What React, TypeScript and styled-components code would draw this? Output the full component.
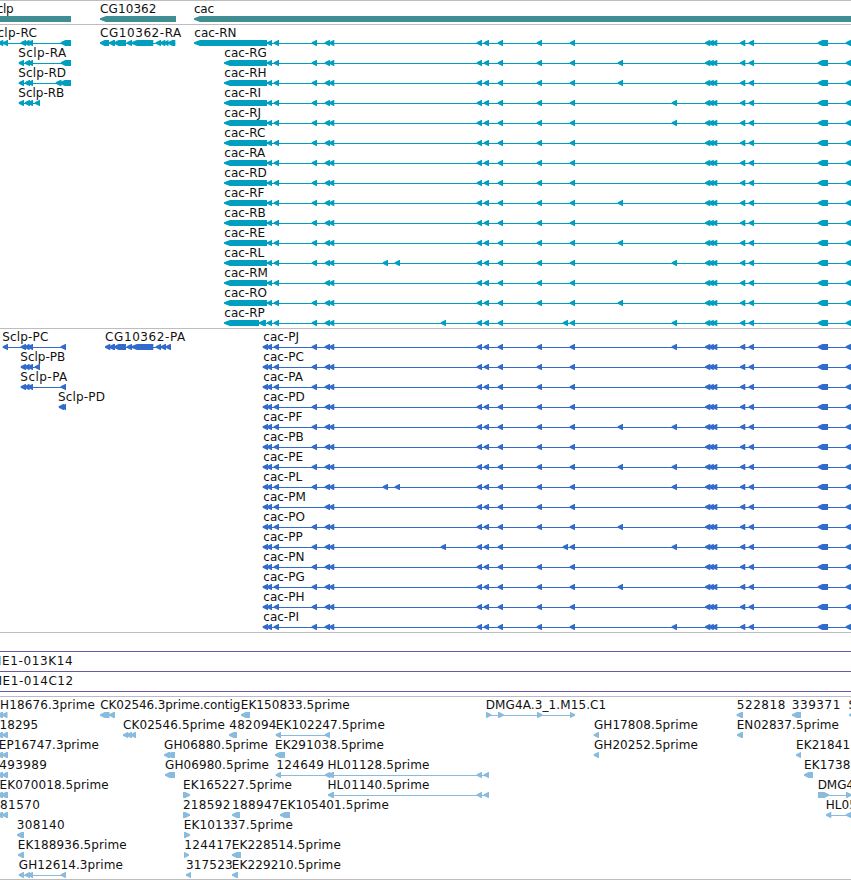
import React from "react";
import styled, { createGlobalStyle } from "styled-components";

const GlobalStyle = createGlobalStyle`
  body {
    margin: 0;
    background: #fff;
    overflow: hidden;
  }
`;

const VIEW_WIDTH = 851;

const Browser = styled.main`
  display: flex;
  flex-direction: column;
  width: ${VIEW_WIDTH}px;
  height: 880px;
  background: #fff;
`;

const TrackPanel = styled.section<{ $color: string; $last?: boolean }>`
  display: flex;
  flex-direction: column;
  padding: 1px 0 ${(p) => (p.$last ? 1 : 2)}px;
  border-top: 1px solid #bdbdbd;
  border-bottom: ${(p) => (p.$last ? "1px solid #bdbdbd" : "none")};
  color: ${(p) => p.$color};
`;

const Lane = styled.svg`
  display: block;
  flex: none;
  width: ${VIEW_WIDTH}px;
  height: 20px;
  overflow: hidden;
`;

const Label = styled.text`
  font-family: "DejaVu Sans", sans-serif;
  font-size: 12px;
  fill: #111;
`;

const Glyph = styled.path`
  fill: currentColor;
`;

type Exon = [start: number, end: number];

interface Feature {
  name: string;
  x: number;
  width?: number;
  exons: Exon[];
  forward?: boolean;
  connected?: boolean;
}

const f = (
  name: string,
  x: number,
  width: number | undefined,
  exons: Exon[],
  connected = false,
  forward = false,
): Feature => ({ name, x, width, exons, connected, forward });

const arrows = (...starts: number[]): Exon[] => starts.map((s) => [s, s + 5.3]);

/* An exon is a bar whose leading end narrows to a blunt tip */
function exonPath([a, b]: Exon, forward?: boolean) {
  const head = Math.min(b - a, b - a > 12 ? 6 : 4.6);
  return forward
    ? `M${b} 16.2L${b - head} 14H${a}V20H${b - head}L${b} 17.8Z`
    : `M${a} 16.2L${a + head} 14H${b}V20H${a + head}L${a} 17.8Z`;
}

function FeatureGlyph({ feature }: { feature: Feature }) {
  const { name, x, width, exons, forward, connected } = feature;
  const from = exons.length ? exons[0][0] : 0;
  const to = exons.length ? exons[exons.length - 1][1] : 0;
  return (
    <g>
      {connected && <Glyph d={`M${from + 1} 17H${to}V18H${from + 1}Z`} />}
      {exons.map((e, i) => (
        <Glyph key={i} d={exonPath(e, forward)} />
      ))}
      {name && (
        <Label x={x} y={11} textLength={width}>
          {name}
        </Label>
      )}
    </g>
  );
}

/* Exons of the cac locus */
const EX_620 = 617.7;
const EX_674 = 671.7;

function cacExons(head: Exon[], extra: number[] = [], skip: number[] = []): Exon[] {
  const shared = [
    273.7, 311.7, 324.7, 329, 476.7, 483.7, 497.7, 536.7, 569.7, 705, 708.5, 712, 740, 748.7,
  ].filter((s) => !skip.includes(s));
  const body = arrows(...shared, ...extra).sort((a, b) => a[0] - b[0]);
  return [...head, ...body, [817.7, 828], [845.7, 853]];
}

const longHead: Exon[] = [[224, 267], [267, 272]];
const pepHead: Exon[] = [[262.7, 268], [266.7, 272]];

const rna = (s: string, extra?: number[], skip?: number[], head = longHead) =>
  f(`cac-R${s}`, head[0][0] + 0.3, undefined, cacExons(head, extra, skip), true);
const pep = (s: string, extra?: number[], skip?: number[]) =>
  f(`cac-P${s}`, 263.3, undefined, cacExons(pepHead, extra, skip), true);

const genes: Feature[][] = [
  [
    f("Sclp", -10.5, 24, [[-12, 71]]),
    f("CG10362", 100, 56.5, [[100, 176]]),
    f("cac", 194, 20, [[194, 860]]),
  ],
];

const triple = arrows(20.7, 24.3, 27.7);
const offsetTriple = arrows(18.7, 24.7, 27.7);

const transcripts: Feature[][] = [
  [
    f("Sclp-RC", -10.5, 47.3, [...arrows(-2, 2.7), ...triple, [60.7, 71]], true),
    f("CG10362-RA", 100, 81.3, [
      [100, 109], [109, 115], [114, 126], [126.7, 132], [131, 153.3],
      [155.7, 161], [160, 165.3], [163.5, 168.5], [167.7, 175.3],
    ], true),
    rna("N", [], [], [[194, 267], [267, 272]]),
  ],
  [f("Sclp-RA", 18.3, 47.8, [...offsetTriple, [60.7, 71]], true), rna("G", [EX_620])],
  [f("Sclp-RD", 18.3, 47.8, [...offsetTriple, [55.7, 61.5], [60, 71]], true), rna("H", [EX_620])],
  [f("Sclp-RB", 18.3, 46, [...offsetTriple, [34.7, 40]], true), rna("I", [EX_674])],
  [rna("J", [EX_674])],
  [rna("C")],
  [rna("A")],
  [rna("D")],
  [rna("F", [EX_620])],
  [rna("B")],
  [rna("E", [EX_620])],
  [rna("L", [382.7, 394.7, EX_674])],
  [rna("M", [], [311.7])],
  [rna("O", [EX_620])],
  [rna("P", [440.7, 562.7, EX_674], [536.7], [[224, 259], [259, 266], [267, 272]])],
];

const proteins: Feature[][] = [
  [
    f("Sclp-PC", 2.3, 46, [...arrows(2.7), ...triple, ...arrows(60.7)], true),
    f("CG10362-PA", 105, 80.3, [
      [105, 110.3], [109, 115], [114, 126], [126.7, 132], [131, 153.3],
      [155.7, 161], [160.5, 166], [165.5, 171],
    ], true),
    pep("J", [EX_674]),
  ],
  [f("Sclp-PB", 20.3, 45, [...triple, [34.7, 40]], true), pep("C")],
  [f("Sclp-PA", 20.3, 47, [...triple, ...arrows(60.7)], true), pep("A")],
  [f("Sclp-PD", 58, 47, arrows(58.7, 60.7)), pep("D")],
  [pep("F", [EX_620, EX_674])],
  [pep("B")],
  [pep("E", [EX_620, EX_674])],
  [pep("L", [382.7, 394.7, EX_674])],
  [pep("M", [], [311.7])],
  [pep("O", [EX_620])],
  [pep("P", [440.7, 562.7, EX_674], [536.7])],
  [pep("N")],
  [pep("G", [EX_620])],
  [pep("H")],
  [pep("I", [EX_674])],
];

const clones = ["", "ME1-013K14", "ME1-014C12"];

const edge: Exon[] = [[-3, 3], [2, 7.5]];

const ests: Feature[][] = [
  [
    f("H18676.3prime", 0, 95, edge),
    f("CK02546.3prime.contig", 100.3, 140, [[100, 109.5], [109, 115]]),
    f("EK150833.5prime", 240.7, 109, [[241, 250]]),
    f("DMG4A.3_1.M15.C1", 485.7, 120.5, [[486, 491.3], [498, 503.7], [537, 542.3], [570, 575]], true, true),
    f("522818", 736.8, 48.5, [[736.7, 743]]),
    f("339371", 791.8, 48.5, [[792, 801]]),
    f("S", 848.5, undefined, [[849, 860]]),
  ],
  [
    f("18295", -0.5, 38.7, [[-3, 3], [2, 8]]),
    f("CK02546.5prime", 123, 102, [[123, 128.3], [126.5, 132], [130.5, 136]]),
    f("482094", 229.2, 47.3, [[229, 237]]),
    f("EK102247.5prime", 275.8, 109, arrows(275.7, 324.7), true),
    f("GH17808.5prime", 593.9, 104, [[593.7, 599]]),
    f("EN02837.5prime", 736.7, 102.3, [[737, 743]]),
  ],
  [
    f("EP16747.3prime", -1.2, 100, [[-3, 3], [2, 8]]),
    f("GH06880.5prime", 164, 104, [[164, 170], [167, 175]]),
    f("EK291038.5prime", 275, 109, [[275, 285]]),
    f("GH20252.5prime", 593.9, 104, [[593.7, 599]]),
    f("EK218413.5prime", 796, 109, [[796, 801]]),
  ],
  [
    f("493989", -0.7, 47.7, [[-3, 3], [2, 8]]),
    f("GH06980.5prime", 165, 104, [[165, 175]]),
    f("124649", 276.3, 47.5, arrows(275.7, 325), true),
    f("HL01128.5prime", 327.4, 102, [[328, 334], ...arrows(476.7, 483.7)], true),
    f("EK173856.5prime", 804, 109, [[804, 813]]),
  ],
  [
    f("EK070018.5prime", -0.4, 109, [[-3, 3], [1, 8]]),
    f("EK165227.5prime", 183, 109, [[183, 190]], false, true),
    f("HL01140.5prime", 327.4, 102, [[328, 334], ...arrows(476.7, 483.7)], true),
    f("DMG4A.3_1", 817.7, 69, [[818, 829], [846, 851.5]], true, true),
  ],
  [
    f("81570", 0.1, 39.7, [[-3, 3], [2, 8]]),
    f("218592", 182.9, 47.5, [[183, 190]], false, true),
    f("188947", 232, 47.5, [[232, 240]]),
    f("EK105401.5prime", 279.8, 109, [[280, 290]]),
    f("HL05201", 825.8, 54, [[826, 831.3], [846, 853]], true),
  ],
  [
    f("308140", 16.7, 48, [[17, 24]]),
    f("EK101337.5prime", 183.8, 109, [[184, 190]], false, true),
  ],
  [
    f("EK188936.5prime", 17.7, 109, [[18, 24]]),
    f("124417", 184.3, 47.5, [[184, 189]], false, true),
    f("EK228514.5prime", 231.8, 109, [[232, 241]]),
  ],
  [
    f("GH12614.3prime", 18.8, 104, [...offsetTriple, ...arrows(60.7)], true),
    f("317523", 185.9, 46.7, [[186, 191]]),
    f("EK229210.5prime", 231.8, 109, [[232, 238]]),
  ],
];

function Track({ lanes, color, last }: { lanes: Feature[][]; color: string; last?: boolean }) {
  return (
    <TrackPanel $color={color} $last={last}>
      {lanes.map((lane, i) => (
        <Lane key={i}>
          {lane.map((feature, j) => (
            <FeatureGlyph key={j} feature={feature} />
          ))}
        </Lane>
      ))}
    </TrackPanel>
  );
}

function CloneTrack() {
  return (
    <TrackPanel $color="#6b57a6">
      {clones.map((name, i) => (
        <Lane key={i}>
          <Glyph d={`M0 17H${VIEW_WIDTH}V18H0Z`} />
          {name && (
            <Label x={i === 1 ? -8.9 : -8.3} y={11} textLength={81.5}>
              {name}
            </Label>
          )}
        </Lane>
      ))}
    </TrackPanel>
  );
}

export default function App() {
  return (
    <>
      <GlobalStyle />
      <Browser>
        <Track lanes={genes} color="#3e8e94" />
        <Track lanes={transcripts} color="#009fbf" />
        <Track lanes={proteins} color="#326bcc" />
        <CloneTrack />
        <Track lanes={ests} color="#88bbdd" last />
      </Browser>
    </>
  );
}
